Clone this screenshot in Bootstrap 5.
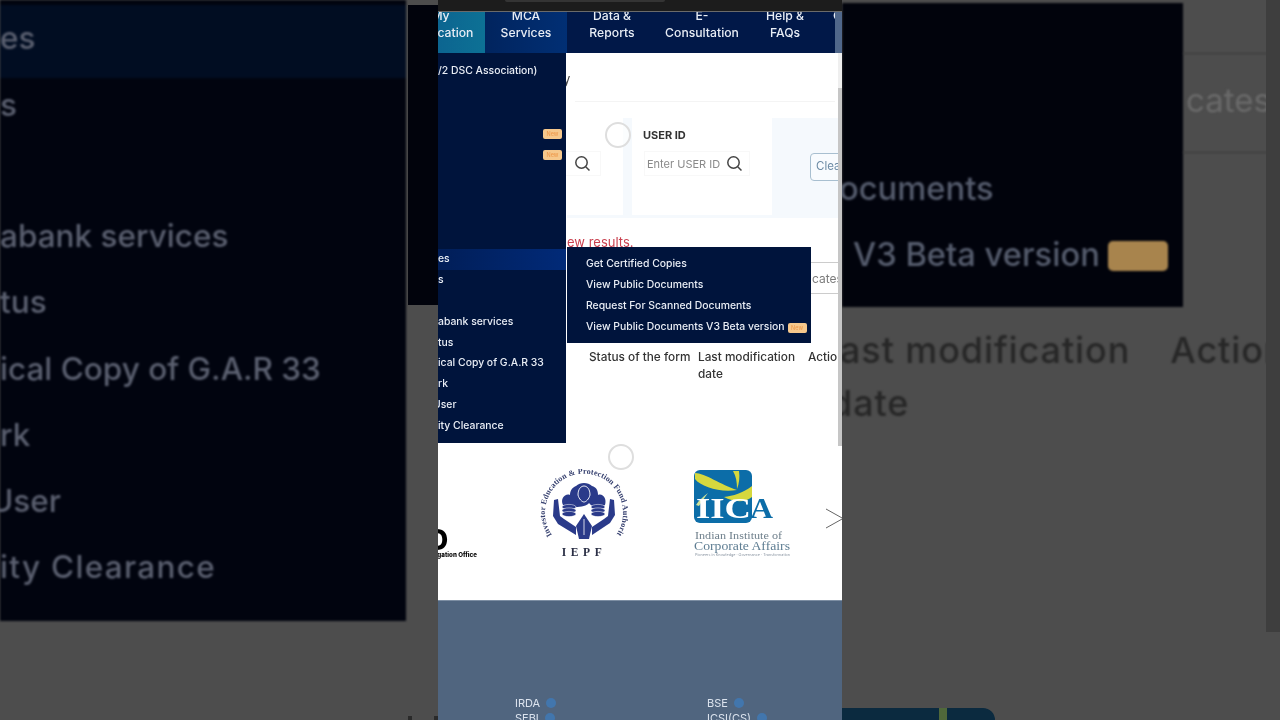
<!DOCTYPE html>
<html lang="en">
<head>
<meta charset="utf-8">
<title>MCA Services</title>
<link href="https://cdn.jsdelivr.net/npm/bootstrap@5.3.0/dist/css/bootstrap.min.css" rel="stylesheet">
<style>
html,body{height:720px;overflow:hidden}
body{background:#4d4d4d;font-family:Inter,"Liberation Sans",sans-serif;color:#333}
.stage{width:1280px;height:720px;overflow:hidden}
.side-l{width:438px;height:720px;flex:none;position:relative;overflow:hidden}
.side-r{width:438px;height:720px;flex:none;position:relative;overflow:hidden}
.phone{width:404px;height:720px;flex:none;position:relative;overflow:hidden;background:#fff;filter:blur(.35px)}
/* blurred side copies */
.lp-main{width:406px;height:621px;background:#01040f;color:#5b6070;font-size:31.5px;font-weight:500;filter:blur(.8px);padding-top:5px}
.lp-band{height:73px;background:#010d22;line-height:66px;margin-bottom:-6px}
.lp-row{height:66.2px;line-height:66px;white-space:nowrap}
.lp-user{margin-left:-10px}
.lp-wide{letter-spacing:1.3px}
.lp-gap2{height:65px}
.lp-sub{position:absolute;left:408px;top:5px;width:30px;height:300px;background:#01030c}
.frag-a,.frag-b{position:absolute;top:716px;width:4px;height:4px;background:#2a2a2a}
.frag-a{left:408px}.frag-b{left:434px}
.rp-main{width:341px;height:304px;margin-top:3px;background:#01030c;color:#565d6e;font-size:32.7px;font-weight:500;filter:blur(.8px);position:relative}
.rp-l1{position:absolute;left:-3px;top:161px;white-space:nowrap}
.rp-l2{position:absolute;left:11px;top:227px;white-space:nowrap}
.rp-new{position:absolute;left:266px;top:238px;width:60px;height:30px;background:#a8844d;border-radius:5px}
.rp-rules{position:absolute;left:341px;top:53px;width:97px;height:100px;border-top:1px solid #3a3a3a;border-bottom:1px solid #3a3a3a;color:#6a6a6a;font-size:33px;font-weight:400;line-height:92px;padding-left:3px;filter:blur(.8px)}
.rp-bar{position:absolute;right:0;top:0;width:14px;height:632px;background:#3e3e3e}
.rp-th{position:absolute;top:324px;left:0;right:0;color:#272727;font-size:36px;font-weight:500;letter-spacing:.9px;line-height:53px;filter:blur(.8px)}
.rp-th1{white-space:nowrap;margin-left:-2px}
.rp-th2{margin-left:-12px}
.rp-act{margin-left:40px}
.rp-logo{position:absolute;left:0;bottom:0;width:153px;height:12px;background:#0b2a3f;border-top-right-radius:14px}
.rp-logo::after{content:"";position:absolute;left:97px;top:0;width:8px;height:12px;background:#50683a}
/* phone */
.status-strip{height:12px;background:#1c1c1c;border-bottom:1px solid #6a6a6a}
.status-pill{width:160px;height:2px;margin-left:67px;background:#343434;border-radius:0 0 6px 6px}
.nav-strip{height:41px;background:#011848;margin-left:-42px;width:446px;overflow:hidden;align-items:stretch}
.nav-cell{font-size:12.2px;font-weight:500;line-height:17px;color:#e8edf5;text-align:center;padding-top:2px;margin-top:-7px;height:48px}
.nav-my{width:89px;background:linear-gradient(90deg,#0b5a8c,#0d7195)}
.nav-mca{width:82px;background:linear-gradient(90deg,#01245e,#012f74)}
.nav-data{width:90px}.nav-e{width:90px}.nav-help{width:76px}.nav-more{width:19px;text-align:left;padding-left:10px}
.nav-end{position:absolute;left:397px;top:12px;width:7px;height:41px;background:#50678a}
.page-top{height:390px;padding-left:129px;position:relative}
.title-zone{height:49px;margin-right:7px;margin-left:8px;border-bottom:1px solid #f4f4f4;color:#444;font-size:13px;line-height:52px}
.title-zone span{margin-left:-12px}
.search-band{height:100px;margin-top:16px;background:#f5f9fd;gap:9px}
.srch-card{background:#fff;height:97px;flex:none}
.srch-a{width:56px}.srch-b{width:140px;padding:8px 11px}
.id-label{font-size:11px;font-weight:700;color:#333;line-height:18px}
.id-input{margin:7px -22px 0 1px;width:106px;height:25px;border:1px solid #f8f8f8;font-size:11px;color:#8a8a8a;padding:0 6px 0 2px;line-height:22px}
.srch-a .id-input{width:36px;margin:33px 0 0 -2px;padding-left:9px;border-left:0}
.mag{width:17px;height:17px;flex:none}
.clear-btn{margin:35px 0 0 29px;width:60px;height:28px;flex:none;border:1px solid #a8bfd0;border-radius:4px;color:#6c8ba5;font-size:11.5px;padding:0 0 0 5px;background:#f8fbfe;text-align:left}
.red-note{color:#c9404f;font-size:13px;line-height:16px;margin-top:16px}
.tab-row{height:32px;margin-top:12px;margin-right:4px;border-top:1px solid #ccc;border-bottom:1px solid #ccc;color:#7c7c7c;font-size:12px;line-height:31px;padding-left:245px;white-space:nowrap;overflow:hidden}
.tbl-head{margin-top:55px;margin-left:22px;font-size:11.8px;font-weight:500;color:#333;line-height:17px}
.tbl-a{width:109px;flex:none;white-space:nowrap}.tbl-b{width:110px;flex:none}
.sb-top{position:absolute;left:400px;top:53px;width:4px;height:35px;background:#efefef}
.sb-thumb{position:absolute;left:400px;top:88px;width:4px;height:358px;background:#c6c6c6}
.menu-left{position:absolute;left:0;top:0;width:128px;height:390px;background:#00143c;color:#e8edf5;font-size:10.4px;font-weight:500;list-style:none;margin:0;padding:8px 0 0;white-space:nowrap}
.menu-left li{height:20.9px;line-height:20.9px;position:relative}
.menu-left .hot{background:linear-gradient(90deg,#011e58,#012a78)}
.mi-user{margin-left:-5px}
.menu-right{position:absolute;left:129px;top:194px;width:244px;height:96px;background:#00143c;color:#e8edf5;font-size:10.4px;font-weight:500;list-style:none;margin:0;padding:6px 0 0 19px;white-space:nowrap}
.menu-right li{height:21px;line-height:21px}
.pill-new{display:inline-block;width:19px;height:10px;background:#f6c88c;border-radius:2px;vertical-align:0;margin-left:3px;color:#ee9a4d;font-size:5.5px;line-height:10px;text-align:center}
.menu-left .pill-new{position:absolute;left:105px;top:5px;margin:0}
.tap{position:absolute;width:26px;height:26px;border:2px solid #dedede;border-radius:50%;background:rgba(255,255,255,.6)}
.tap-a{left:167px;top:69px}.tap-b{left:170px;top:391px}
.logo-band{height:157px;position:relative;overflow:hidden}
.logo-d{position:absolute;left:-10px;top:84px;color:#000;font-weight:800;font-size:28px;line-height:27px}
.logo-d small{position:absolute;left:-31px;top:24px;width:80px;text-align:right;display:block;font-size:6.2px;font-weight:800;line-height:7px;white-space:nowrap}
.logo-i{position:absolute;left:102px;top:26px}
.logo-c{position:absolute;left:255px;top:26px}
.chev{position:absolute;left:388px;top:63px}
.foot-band{height:120px;background:#50657f;border-top:1px solid #7d8ea3;color:#dbe3ee;font-size:11px;padding:95px 0 0 77px}
.foot-col{width:192px;flex:none;line-height:15px}
.dotg{display:inline-block;width:10px;height:10px;border-radius:50%;background:#4276ad;margin-left:6px;vertical-align:-1px}
.srf{font-family:"Liberation Serif",serif}
</style>
</head>
<body>
<div class="stage d-flex">

  <div class="side-l">
    <div class="lp-main">
      <div class="lp-band">es</div>
      <div class="lp-row">s</div>
      <div class="lp-gap2"></div>
      <div class="lp-row">abank services</div>
      <div class="lp-row">tus</div>
      <div class="lp-row">ical Copy of G.A.R 33</div>
      <div class="lp-row">rk</div>
      <div class="lp-row lp-user">User</div>
      <div class="lp-row lp-wide">ity Clearance</div>
    </div>
    <div class="lp-sub"></div>
    <div class="frag-a"></div>
    <div class="frag-b"></div>
  </div>

  <div class="phone">
    <div class="status-strip"><div class="status-pill"></div></div>
    <nav class="nav-strip d-flex">
      <div class="nav-cell nav-my">My<br>Application</div>
      <div class="nav-cell nav-mca">MCA<br>Services</div>
      <div class="nav-cell nav-data">Data &amp;<br>Reports</div>
      <div class="nav-cell nav-e">E-<br>Consultation</div>
      <div class="nav-cell nav-help">Help &amp;<br>FAQs</div>
      <div class="nav-cell nav-more">C</div>
    </nav>
    <div class="nav-end"></div>

    <div class="page-top">
      <div class="title-zone"><span>y</span></div>
      <div class="search-band d-flex">
        <div class="srch-card srch-a">
          <div class="id-input d-flex align-items-center">
            <svg class="mag" viewBox="0 0 17 17" fill="none" stroke="#444" stroke-width="1.5"><circle cx="7.5" cy="7.5" r="5.7"/><path d="M11.7 11.7 15.5 15.5"/></svg>
          </div>
        </div>
        <div class="srch-card srch-b">
          <div class="id-label">USER ID</div>
          <div class="id-input d-flex align-items-center justify-content-between">
            <span>Enter USER ID</span>
            <svg class="mag" viewBox="0 0 17 17" fill="none" stroke="#444" stroke-width="1.5"><circle cx="7.5" cy="7.5" r="5.7"/><path d="M11.7 11.7 15.5 15.5"/></svg>
          </div>
        </div>
        <button class="clear-btn" type="button">Clear</button>
      </div>
      <div class="red-note">ew results.</div>
      <div class="tab-row">cates</div>
      <div class="tbl-head d-flex">
        <div class="tbl-a">Status of the form</div>
        <div class="tbl-b">Last modification date</div>
        <div>Action</div>
      </div>

      <ul class="menu-left">
        <li>/2 DSC Association)</li>
        <li></li><li></li>
        <li><span class="pill-new">New</span></li>
        <li><span class="pill-new">New</span></li>
        <li></li><li></li><li></li><li></li>
        <li class="hot">es</li>
        <li>s</li>
        <li></li>
        <li>abank services</li>
        <li>tus</li>
        <li>ical Copy of G.A.R 33</li>
        <li>rk</li>
        <li class="mi-user">User</li>
        <li>ity Clearance</li>
      </ul>
      <ul class="menu-right">
        <li>Get Certified Copies</li>
        <li>View Public Documents</li>
        <li>Request For Scanned Documents</li>
        <li>View Public Documents V3 Beta version<span class="pill-new">New</span></li>
      </ul>
      <div class="tap tap-a"></div>
      <div class="tap tap-b"></div>
    </div>

    <section class="logo-band">
      <div class="logo-d">D<small>gation Office</small></div>
      <svg class="logo-i" width="88" height="90" viewBox="0 0 88 90">
        <defs><path id="arcI" d="M12 66 A39 39 0 1 1 76 66"/></defs>
        <text class="srf" font-size="8" font-weight="700" fill="#36406f" letter-spacing=".12"><textPath href="#arcI" startOffset="0">Investor Education &amp; Protection Fund Authority</textPath></text>
        <path fill="#2a3a8a" d="M23 36c-3-6 2-12 7-10 0-5 3-8 6-9 4-4 12-4 16 0 4 1 6 4 6 9 5-2 9 4 7 10-7 4-13 2-16-2-3 4-16 6-26 2z"/>
        <path fill="none" stroke="#fff" stroke-width=".9" d="M38 26c0-6 3-9 6-9s6 3 6 9c-1 4-4 7-6 7s-5-3-6-7z"/>
        <g fill="#2a3a8a" stroke="#fff" stroke-width=".5"><ellipse cx="29" cy="38" rx="7" ry="2.6"/><ellipse cx="29" cy="41.5" rx="7" ry="2.6"/><ellipse cx="29" cy="45" rx="7" ry="2.6"/><ellipse cx="58" cy="38" rx="7" ry="2.6"/><ellipse cx="58" cy="41.5" rx="7" ry="2.6"/><ellipse cx="58" cy="45" rx="7" ry="2.6"/></g>
        <g fill="#2a3a8a"><path d="M14 31l4-1 2 17 4 3 12 8v8L18 55l-5-8z"/><path d="M74 31l-4-1-2 17-4 3-12 8v8l18-12 5-8z"/>
        <path d="M44 45l8 12-3 13h-10l-3-13z"/></g>
        <path stroke="#fff" stroke-width=".8" d="M44 50v16"/>
        <text class="srf" x="44" y="87" text-anchor="middle" font-size="11.5" font-weight="700" fill="#2b2f45" letter-spacing="4.6">IEPF</text>
      </svg>
      <svg class="logo-c" width="100" height="90" viewBox="0 0 100 90">
        <rect x="1" y="1" width="58" height="53" rx="6" fill="#0c6da8"/>
        <path fill="#d5d83e" d="M2 4C12 4 28 16 44 21 28 24 8 18 2 10z"/>
        <path fill="#d5d83e" d="M40 2h6c1 6 0 13-2 18 0-7-1-13-4-18z"/>
        <path fill="#d5d83e" d="M59 17C50 24 40 27 31 28c9 5 21 6 28 0z"/>
        <path fill="#cfe39a" d="M3 36c3-5 7-8 12-12-3 4-6 8-9 13z"/>
        <text class="srf" x="3" y="49" font-size="30" font-weight="700" fill="#fff" textLength="55" lengthAdjust="spacingAndGlyphs">IIC</text>
        <text class="srf" x="57" y="49" font-size="30" font-weight="700" fill="#0c6da8" textLength="23" lengthAdjust="spacingAndGlyphs">A</text>
        <text class="srf" x="2" y="70" font-size="10" fill="#6e7f8b" textLength="87" lengthAdjust="spacingAndGlyphs">Indian Institute of</text>
        <text class="srf" x="1" y="80.5" font-size="12" fill="#5e7d92" textLength="96" lengthAdjust="spacingAndGlyphs">Corporate Affairs</text>
        <text x="2" y="87" font-size="3.6" fill="#8893a0" textLength="95" lengthAdjust="spacingAndGlyphs">Pioneers in Knowledge · Governance · Transformation</text>
      </svg>
      <svg class="chev" width="16" height="24" viewBox="0 0 16 24" fill="none" stroke="#666" stroke-width="1"><path d="M0 3 17 12.5 0 22"/></svg>
    </section>

    <footer class="foot-band d-flex">
      <div class="foot-col">IRDA<span class="dotg"></span><br>SEBI<span class="dotg"></span></div>
      <div class="foot-col">BSE<span class="dotg"></span><br>ICSI(CS)<span class="dotg"></span></div>
    </footer>
    <div class="sb-top"></div>
    <div class="sb-thumb"></div>
  </div>

  <div class="side-r">
    <div class="rp-main">
      <div class="rp-l1">ocuments</div>
      <div class="rp-l2">V3 Beta version</div>
      <div class="rp-new"></div>
    </div>
    <div class="rp-rules">cates</div>
    <div class="rp-th">
      <div class="rp-th1">ast modification<span class="rp-act">Action</span></div>
      <div class="rp-th2">date</div>
    </div>
    <div class="rp-bar"></div>
    <div class="rp-logo"></div>
  </div>
</div>
<script src="https://cdn.jsdelivr.net/npm/bootstrap@5.3.0/dist/js/bootstrap.bundle.min.js"></script>
</body>
</html>
